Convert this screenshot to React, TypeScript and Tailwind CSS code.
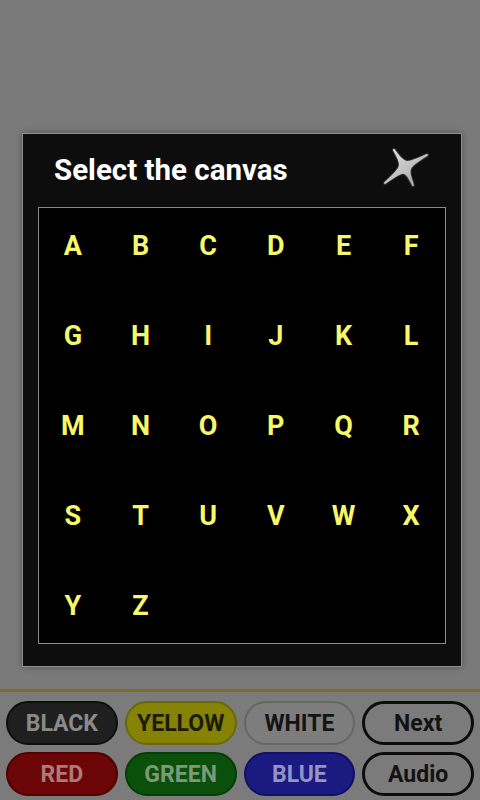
import React from 'react';

const letters = 'ABCDEFGHIJKLMNOPQRSTUVWXYZ'.split('');

const buttons = [
    { label: 'BLACK', cls: 'bg-[#1f1f1f] border-[#0e0e0e] text-[#8a8a8a]' },
    { label: 'YELLOW', cls: 'bg-[#858205] border-[#6a6804] text-[#1c1c05]' },
    { label: 'WHITE', cls: 'bg-[#7d7d7d] border-[#666666] text-[#141414]' },
    { label: 'Next', cls: 'bg-[#7b7b7b] border-[#0c0c0c] border-[3px] text-[#121212]' },
    { label: 'RED', cls: 'bg-[#6c0505] border-[#500000] text-[#ad7a7a]' },
    { label: 'GREEN', cls: 'bg-[#0a500a] border-[#053b05] text-[#7a9a7a]' },
    { label: 'BLUE', cls: 'bg-[#1a1a80] border-[#101066] text-[#9494c4]' },
    { label: 'Audio', cls: 'bg-[#7b7b7b] border-[#0c0c0c] border-[3px] text-[#121212]' },
];

const starPath =
    'M12 3 C23.4 18 23.4 18 45 8 C25 20.6 25 20.6 31 38 C22.6 22 22.6 22 3 36 C21 19.6 21 19.6 12 3 Z';

const CloseStar = () => (
    <svg width="50" height="44" viewBox="0 0 50 44">
        <defs>
            <linearGradient id="star" x1="0" y1="0" x2="1" y2="1">
                <stop offset="0" stopColor="#e4e4e4" />
                <stop offset="1" stopColor="#a0a0a0" />
            </linearGradient>
        </defs>
        {/* soft halo */}
        <path d={starPath} fill="#666" opacity="0.4" stroke="#666" strokeWidth="4" strokeLinejoin="round" />
        <path d={starPath} fill="url(#star)" stroke="url(#star)" strokeWidth="2" strokeLinejoin="round" />
    </svg>
);

export default function App() {
    return (
        <div className="w-[480px] h-[800px] bg-[#7a7a7a] flex flex-col overflow-hidden font-['Roboto','Liberation_Sans',sans-serif]">
            {/* dialog area */}
            <div className="h-[689px] pt-[133px] pl-[22px] pr-[18px]">
                <div className="h-[534px] bg-[#0d0d0d] border border-[#8e8e8e] shadow-[0_0_6px_rgba(0,0,0,0.35)] flex flex-col">
                    <div className="h-[73px] flex items-center justify-between pl-[31px] pr-[29px]">
                        <h1 className="text-white font-bold text-[29.5px] leading-none">Select the canvas</h1>
                        <div className="mt-[-4px]">
                            <CloseStar />
                        </div>
                    </div>
                    <div className="mx-[15px] h-[437px] bg-black border border-[#8a8a8a] grid grid-cols-6 content-start pt-[22px]">
                        {letters.map((l) => (
                            <div key={l} className="h-[90px] flex justify-center">
                                <span className="text-[#f7f76a] font-bold text-[27px] leading-[32px]">{l}</span>
                            </div>
                        ))}
                    </div>
                </div>
            </div>

            <div className="h-[3px] bg-[#7e6c28]" />

            {/* color buttons */}
            <div className="flex-1 bg-[#7b7b7b] grid grid-cols-4 gap-x-[7px] gap-y-[7px] px-[6px] pt-[9px] pb-[4px]">
                {buttons.map((b) => (
                    <div key={b.label}
                         className={`h-[44px] rounded-full border-2 flex items-center justify-center font-bold text-[23px] leading-none ${b.cls}`}>
                        {b.label}
                    </div>
                ))}
            </div>
        </div>
    );
}
